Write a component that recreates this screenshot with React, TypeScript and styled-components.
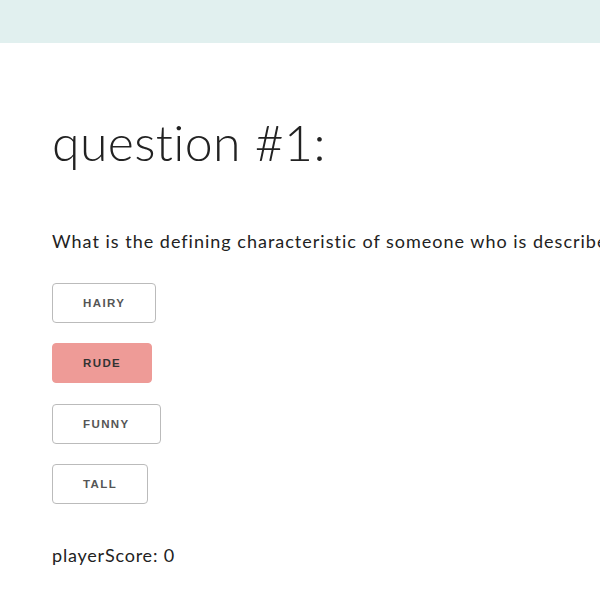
import styled, { createGlobalStyle } from "styled-components";

const GlobalStyle = createGlobalStyle`
  html, body {
    margin: 0;
    padding: 0;
    background: #fff;
  }
  body {
    font-family: Lato, "Open Sans", sans-serif;
    color: #222;
    overflow: hidden;
  }
`;

const answers = ["hairy", "rude", "funny", "tall"];

export default function App() {
  const picked = "rude";

  return (
    <>
      <GlobalStyle />
      <TopBar />
      <Page>
        <Heading>question #1:</Heading>
        <Question>
          What is the defining characteristic of someone who is described as
          boorish?
        </Question>
        <AnswerList>
          {answers.map((a) => (
            <AnswerButton key={a} $picked={a === picked}>
              {a}
            </AnswerButton>
          ))}
        </AnswerList>
        <Score>playerScore: 0</Score>
      </Page>
    </>
  );
}

const TopBar = styled.div`
  height: 43px;
  background: #e1f0ef;
`;

const Page = styled.div`
  padding: 0 0 0 52px;
  display: flex;
  flex-direction: column;
  align-items: flex-start;
`;

const Heading = styled.h1`
  margin: 69px 0 0;
  font-size: 50px;
  font-weight: 300;
  line-height: 60px;
  letter-spacing: 0.35px;
`;

const Question = styled.p`
  margin: 57px 0 0;
  font-size: 18px;
  line-height: 24px;
  letter-spacing: 1px;
  white-space: nowrap;
`;

const AnswerList = styled.div`
  display: flex;
  flex-direction: column;
  align-items: flex-start;
  gap: 20.3px;
  margin-top: 30px;
`;

const AnswerButton = styled.button<{ $picked: boolean }>`
  height: 40px;
  padding: 0 30px;
  border: 1px solid ${(p) => (p.$picked ? "#ee9b97" : "#bbb")};
  border-radius: 4px;
  background: ${(p) => (p.$picked ? "#ee9b97" : "transparent")};
  color: ${(p) => (p.$picked ? "#333" : "#555")};
  font-family: "Liberation Sans", Arial, sans-serif;
  font-size: 11.5px;
  font-weight: 700;
  letter-spacing: 1.4px;
  text-transform: uppercase;
  cursor: pointer;
`;

const Score = styled.p`
  margin: 39px 0 0;
  font-size: 18px;
  line-height: 24px;
  letter-spacing: 0.8px;
`;
